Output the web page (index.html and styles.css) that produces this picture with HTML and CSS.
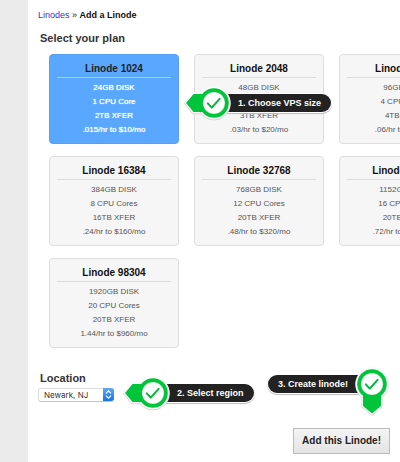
FILE: index.html
```html
<!DOCTYPE html>
<html lang="en">
<head>
<meta charset="utf-8">
<title>Add a Linode</title>
<link rel="stylesheet" href="styles.css">
</head>
<body>
<svg class="defs" aria-hidden="true">
  <symbol id="halo" viewBox="0 0 36 36">
    <circle cx="18" cy="18.5" r="16.7" fill="#c9c9c9"/>
    <circle cx="18" cy="18" r="16.5" fill="#fff"/>
  </symbol>
  <symbol id="disc" viewBox="0 0 36 36">
    <circle cx="18" cy="18" r="14.8" fill="#00c53b"/>
    <circle cx="18" cy="18" r="11.1" fill="#a9dfb6"/>
    <circle cx="18" cy="18" r="10.6" fill="#fff"/>
    <path d="M11.8 18.4l4 4.200 7.800-8.800" fill="none" stroke="#00b83a" stroke-width="2" stroke-linecap="round" stroke-linejoin="round"/>
  </symbol>
  <symbol id="marker-left" viewBox="0 0 48 36">
    <path d="M0 18.5L8.500 8H24V29.300H8.500Z" fill="#c9c9c9"/>
    <path d="M.4 18L8.700 7.600H24V28.400H8.700Z" fill="#fff"/>
    <use href="#halo" x="12" y="0" width="36" height="36"/>
    <path d="M2 18L9.500 9H24V27H9.500Z" fill="#00c53b"/>
    <use href="#disc" x="12" y="0" width="36" height="36"/>
  </symbol>
</svg>
<div class="page">
  <main class="content">
    <nav class="crumbs"><a href="#">Linodes</a> » <strong>Add a Linode</strong></nav>
    <h1 class="heading">Select your plan</h1>
    <div class="plans">
      <button class="plan selected" type="button">
        <span class="name">Linode 1024</span>
        <span>24GB DISK</span><span>1 CPU Core</span><span>2TB XFER</span><span>.015/hr to $10/mo</span>
      </button>
      <button class="plan" type="button">
        <span class="name">Linode 2048</span>
        <span>48GB DISK</span><span>2 CPU Cores</span><span>3TB XFER</span><span>.03/hr to $20/mo</span>
      </button>
      <button class="plan" type="button">
        <span class="name">Linode 4096</span>
        <span>96GB DISK</span><span>4 CPU Cores</span><span>4TB XFER</span><span>.06/hr to $40/mo</span>
      </button>
      <button class="plan" type="button">
        <span class="name">Linode 16384</span>
        <span>384GB DISK</span><span>8 CPU Cores</span><span>16TB XFER</span><span>.24/hr to $160/mo</span>
      </button>
      <button class="plan" type="button">
        <span class="name">Linode 32768</span>
        <span>768GB DISK</span><span>12 CPU Cores</span><span>20TB XFER</span><span>.48/hr to $320/mo</span>
      </button>
      <button class="plan" type="button">
        <span class="name">Linode 49152</span>
        <span>1152GB DISK</span><span>16 CPU Cores</span><span>20TB XFER</span><span>.72/hr to $480/mo</span>
      </button>
      <button class="plan" type="button">
        <span class="name">Linode 98304</span>
        <span>1920GB DISK</span><span>20 CPU Cores</span><span>20TB XFER</span><span>1.44/hr to $960/mo</span>
      </button>
      <div class="step step-size">
        <svg class="marker" viewBox="0 0 48 36" aria-hidden="true"><use href="#marker-left" width="48" height="36"/></svg>
        <span class="tag">1. Choose VPS size</span>
      </div>
    </div>
    <div class="bottom">
      <div class="location">
        <label class="heading" for="region">Location</label>
        <span class="picker">
          <select id="region"><option>Newark, NJ</option></select>
          <svg class="arrows" viewBox="0 0 11 13" aria-hidden="true">
            <path d="M3 5.300L5.500 2.800 8 5.300M3 7.700L5.500 10.200 8 7.700" fill="none" stroke="#fff" stroke-width="1.200"/>
          </svg>
        </span>
      </div>
      <div class="step">
        <svg class="marker" viewBox="0 0 48 36" aria-hidden="true"><use href="#marker-left" width="48" height="36"/></svg>
        <span class="tag">2. Select region</span>
      </div>
      <div class="submit">
        <div class="step step-create">
          <span class="tag">3. Create linode!</span>
          <svg class="marker-down" viewBox="0 0 36 50" aria-hidden="true">
            <path d="M7.400 26H28.600V41L18 50 7.400 41Z" fill="#c9c9c9"/>
            <path d="M7.700 26H28.300V40.600L18 49.200 7.700 40.600Z" fill="#fff"/>
            <use href="#halo" x="0" y="0" width="36" height="36"/>
            <path d="M9 26H27V40L18 47.500 9 40Z" fill="#00c53b"/>
            <use href="#disc" x="0" y="0" width="36" height="36"/>
          </svg>
        </div>
        <button class="add" type="submit">Add this Linode!</button>
      </div>
    </div>
  </main>
</div>
</body>
</html>
```
FILE: styles.css
```css
* { box-sizing: border-box; }

body {
  margin: 0;
  background: #fff;
  color: #222;
  font-family: "Liberation Sans", Arial, sans-serif;
  font-size: 9px;
}

.defs {
  position: absolute;
  width: 0;
  height: 0;
}

.page {
  min-height: 100vh;
  border-left: 28px solid #ebebeb;
}

.content {
  overflow: hidden;
  padding: 8px 10px;
}

.crumbs {
  font-size: 9px;
  line-height: 14px;
}

.crumbs a {
  color: #3a2fd0;
  text-decoration: none;
}

.crumbs strong { color: #111; }

.heading {
  display: block;
  margin: 0;
  padding-left: 2px;
  color: #333;
  font-size: 11px;
  font-weight: bold;
  line-height: 16px;
}

h1.heading { padding-top: 8px; }

.plans {
  position: relative;
  display: grid;
  grid-template-columns: repeat(3, 130px);
  gap: 12px 15px;
  padding: 8px 0 0 11px;
}

.plan {
  display: flex;
  flex-direction: column;
  height: 90px;
  padding: 6px 7px;
  border: 1px solid #dedede;
  border-radius: 4px;
  background: #f6f6f6;
  color: #555;
  font: 8px/14px "Liberation Sans", Arial, sans-serif;
  text-align: center;
}

.plan .name {
  margin-bottom: 3px;
  border-bottom: 1px solid #dcdcdc;
  color: #111;
  font-size: 10px;
  font-weight: bold;
  line-height: 16px;
}

.plan.selected {
  border-color: #559ff5;
  background: #5aa7ff;
  color: #fff;
  text-shadow: 0 0 1px #fff;
}

.plan.selected .name {
  border-color: #a5ceff;
  color: #222;
  text-shadow: none;
}

.step {
  display: flex;
  align-items: center;
}

.step-size {
  position: absolute;
  top: 39px;
  left: 146px;
}

.marker {
  position: relative;
  flex: none;
  width: 48px;
  height: 36px;
}

.marker-down {
  position: relative;
  flex: none;
  width: 36px;
  height: 50px;
}

.tag {
  margin-left: -4px;
  padding: 0 10px;
  border-radius: 0 9px 9px 0;
  background: #222;
  box-shadow: 0 0 0 1px #fff, 0 1px 1px 1px #bbb;
  color: #fff;
  font-size: 9px;
  font-weight: bold;
  line-height: 18px;
  white-space: nowrap;
}

.bottom {
  display: flex;
  align-items: flex-start;
  padding-top: 22px;
}

.location { width: 85px; }

.bottom > .step { padding-top: 5px; }

.picker {
  position: relative;
  display: block;
  width: 76px;
}

.picker select {
  display: block;
  appearance: none;
  width: 100%;
  height: 14px;
  margin-top: 2px;
  padding: 0 14px 0 5px;
  border: 1px solid #ddd;
  border-bottom-color: #c4c4c4;
  border-radius: 3px;
  background: #fff;
  color: #333;
  font: 8px/12px Inter, "Liberation Sans", sans-serif;
}

.arrows {
  position: absolute;
  top: 0;
  right: 0;
  width: 11px;
  height: 13px;
  border-radius: 0 3px 3px 0;
  background: linear-gradient(#5fa9f8, #1a70f0);
  pointer-events: none;
}

.submit {
  display: flex;
  flex-direction: column;
  align-items: flex-end;
  flex: 1;
  min-width: 0;
}

.step-create {
  align-items: flex-start;
  margin-top: -4px;
}

.step-create .tag {
  margin: 9px -4px 0 0;
  border-radius: 9px 0 0 9px;
}

.add {
  height: 26px;
  margin-top: 12px;
  padding: 0 8px;
  border: 1px solid #bbb;
  border-radius: 0;
  background: linear-gradient(#f4f4f4, #e4e4e4);
  color: #222;
  font: bold 10px/16px "Liberation Sans", Arial, sans-serif;
}
```
